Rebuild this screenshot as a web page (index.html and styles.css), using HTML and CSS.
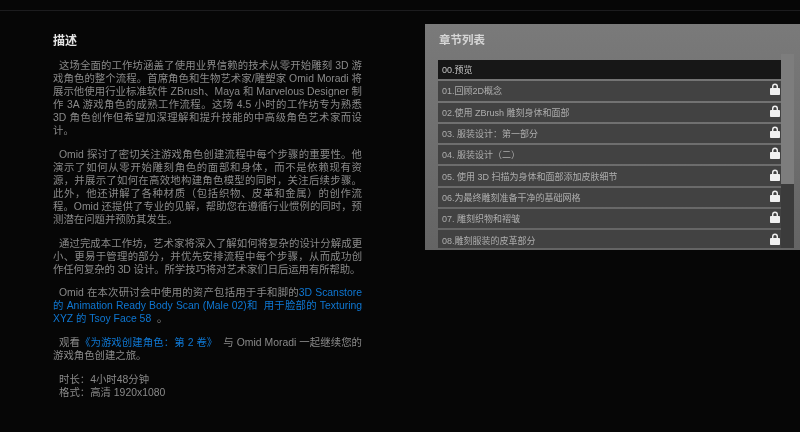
FILE: index.html
```html
<!DOCTYPE html>
<html lang="zh-CN">
<head>
<meta charset="utf-8">
<title>描述</title>
<link rel="stylesheet" href="styles.css">
</head>
<body>
<div class="page">
  <main class="desc">
    <h2 class="desc-title">描述</h2>
    <p class="para">这场全面的工作坊涵盖了使用业界信赖的技术从零开始雕刻 3D 游戏角色的整个流程。首席角色和生物艺术家/雕塑家 Omid Moradi 将展示他使用行业标准软件 ZBrush、Maya 和 Marvelous Designer 制作 3A 游戏角色的成熟工作流程。这场 4.5 小时的工作坊专为熟悉 3D 角色创作但希望加深理解和提升技能的中高级角色艺术家而设计。</p>
    <p class="para">Omid 探讨了密切关注游戏角色创建流程中每个步骤的重要性。他演示了如何从零开始雕刻角色的面部和身体，而不是依赖现有资源，并展示了如何在高效地构建角色模型的同时，关注后续步骤。此外，他还讲解了各种材质（包括织物、皮革和金属）的创作流程。Omid 还提供了专业的见解，帮助您在遵循行业惯例的同时，预测潜在问题并预防其发生。</p>
    <p class="para para-tight">通过完成本工作坊，艺术家将深入了解如何将复杂的设计分解成更小、更易于管理的部分，并优先安排流程中每个步骤，从而成功创作任何复杂的 3D 设计。所学技巧将对艺术家们日后运用有所帮助。</p>
    <p class="para">Omid 在本次研讨会中使用的资产包括用于手和脚的<a class="link" href="#">3D Scanstore 的 Animation Ready Body Scan (Male 02)和&nbsp; 用于脸部的 Texturing XYZ 的 Tsoy Face 58</a>&nbsp; 。</p>
    <p class="para">观看<a class="link" href="#">《为游戏创建角色：第 2 卷》</a>&nbsp; 与 Omid Moradi 一起继续您的游戏角色创建之旅。</p>
    <p class="para para-meta">时长：4小时48分钟<br>格式：高清 1920x1080</p>
  </main>
  <aside class="panel">
    <h2 class="panel-title">章节列表</h2>
    <div class="list-wrap">
      <ul class="chapters">
        <li class="chapter chapter-active"><span>00.预览</span></li>
        <li class="chapter"><span>01.回顾2D概念</span><svg class="lock" viewBox="0 0 10 12"><path d="M2 5.5V3.6a3 3 0 0 1 6 0v1.9H6.6V3.7a1.6 1.6 0 0 0-3.2 0v1.8z"/><rect y="5" width="10" height="7" rx=".8"/></svg></li>
        <li class="chapter"><span>02.使用 ZBrush 雕刻身体和面部</span><svg class="lock" viewBox="0 0 10 12"><path d="M2 5.5V3.6a3 3 0 0 1 6 0v1.9H6.6V3.7a1.6 1.6 0 0 0-3.2 0v1.8z"/><rect y="5" width="10" height="7" rx=".8"/></svg></li>
        <li class="chapter"><span>03. 服装设计：第一部分</span><svg class="lock" viewBox="0 0 10 12"><path d="M2 5.5V3.6a3 3 0 0 1 6 0v1.9H6.6V3.7a1.6 1.6 0 0 0-3.2 0v1.8z"/><rect y="5" width="10" height="7" rx=".8"/></svg></li>
        <li class="chapter"><span>04. 服装设计（二）</span><svg class="lock" viewBox="0 0 10 12"><path d="M2 5.5V3.6a3 3 0 0 1 6 0v1.9H6.6V3.7a1.6 1.6 0 0 0-3.2 0v1.8z"/><rect y="5" width="10" height="7" rx=".8"/></svg></li>
        <li class="chapter"><span>05. 使用 3D 扫描为身体和面部添加皮肤细节</span><svg class="lock" viewBox="0 0 10 12"><path d="M2 5.5V3.6a3 3 0 0 1 6 0v1.9H6.6V3.7a1.6 1.6 0 0 0-3.2 0v1.8z"/><rect y="5" width="10" height="7" rx=".8"/></svg></li>
        <li class="chapter"><span>06.为最终雕刻准备干净的基础网格</span><svg class="lock" viewBox="0 0 10 12"><path d="M2 5.5V3.6a3 3 0 0 1 6 0v1.9H6.6V3.7a1.6 1.6 0 0 0-3.2 0v1.8z"/><rect y="5" width="10" height="7" rx=".8"/></svg></li>
        <li class="chapter"><span>07. 雕刻织物和褶皱</span><svg class="lock" viewBox="0 0 10 12"><path d="M2 5.5V3.6a3 3 0 0 1 6 0v1.9H6.6V3.7a1.6 1.6 0 0 0-3.2 0v1.8z"/><rect y="5" width="10" height="7" rx=".8"/></svg></li>
        <li class="chapter"><span>08.雕刻服装的皮革部分</span><svg class="lock" viewBox="0 0 10 12"><path d="M2 5.5V3.6a3 3 0 0 1 6 0v1.9H6.6V3.7a1.6 1.6 0 0 0-3.2 0v1.8z"/><rect y="5" width="10" height="7" rx=".8"/></svg></li>
      </ul>
      <div class="scrollbar"><div class="thumb"></div></div>
    </div>
  </aside>
</div>
</body>
</html>
```
FILE: styles.css
```css
* { box-sizing: border-box; }
html, body { margin: 0; padding: 0; }
body {
  width: 800px;
  height: 432px;
  overflow: hidden;
  background: #060606;
  font-family: "Liberation Sans", "Noto Sans CJK SC", sans-serif;
  color: #8a8a8a;
}
.page {
  display: flex;
  align-items: flex-start;
  border-top: 1px solid #1c1c1e;
  margin-top: 10px;
  height: 422px;
  filter: blur(0.35px);
}
.desc {
  width: 309px;
  margin-left: 53px;
  padding-top: 22px;
}
.desc-title {
  margin: 0 0 10px;
  font-size: 12px;
  line-height: 16px;
  font-weight: 700;
  color: #e4e4e4;
}
.para {
  margin: 0 0 10.8px;
  font-size: 10.4px;
  line-height: 13px;
  text-align: justify;
  text-indent: 6px;
}
.para-tight { letter-spacing: -0.08px; }
.para-meta { text-align: left; text-indent: 0; padding-left: 6px; }
.link { color: #0f78d4; text-decoration: none; }
.panel {
  width: 375px;
  height: 226px;
  margin-left: 63px;
  margin-top: 13px;
  padding: 8px 6px 0 13px;
  background: linear-gradient(#7a7a7a, #646464);
  overflow: hidden;
}
.panel-title {
  margin: 0 0 6px;
  height: 16px;
  padding-left: 1px;
  font-size: 11.5px;
  line-height: 16px;
  font-weight: 700;
  color: #d6d6d6;
}
.list-wrap {
  display: flex;
  align-items: flex-start;
  height: 194px;
  overflow: hidden;
}
.chapters {
  list-style: none;
  margin: 6px 0 0;
  padding: 0;
  width: 343px;
  flex: none;
}
.chapter {
  height: 19.3px;
  margin-bottom: 2px;
  padding: 0 1px 0 4px;
  display: flex;
  align-items: center;
  justify-content: space-between;
  background: #424242;
  font-size: 9px;
  color: #aeaeae;
}
.chapter-active { background: #171717; color: #c4c4c4; }
.lock { width: 10px; height: 12px; margin-bottom: 3px; fill: #f0f0f0; flex: none; }
.scrollbar {
  width: 13px;
  height: 194px;
  flex: none;
  background: #3b3b3b;
}
.thumb { height: 130px; background: #7d7d7d; }
```
